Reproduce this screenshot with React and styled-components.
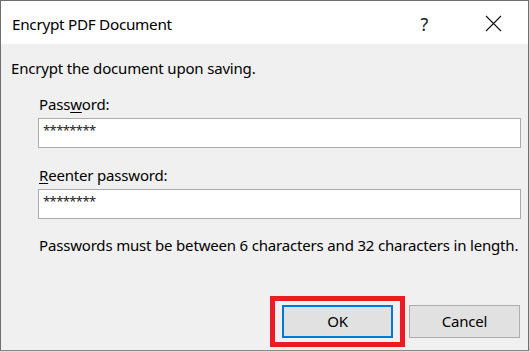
import React from 'react'
import styled, { createGlobalStyle } from 'styled-components'

const GlobalStyle = createGlobalStyle`
  html, body {
    margin: 0;
    padding: 0;
    background: #dcdcdc;
  }
  body {
    font-family: "Segoe UI", "Noto Sans", "Open Sans", sans-serif;
    color: #000;
  }
`

const Dialog = styled.div`
  box-sizing: border-box;
  width: 529px;
  height: 351px;
  display: flex;
  flex-direction: column;
  background: #f0f0f0;
  border: 1px solid #6f6f6f;
  border-bottom-color: #8a8a8a;
`

const TitleBar = styled.div`
  height: 43px;
  flex: none;
  display: flex;
  align-items: center;
  background: #fff;
`

const Title = styled.div`
  flex: 1;
  padding-left: 11px;
  padding-top: 3px;
  font-size: 15.3px;
  letter-spacing: -0.3px;
`

const CaptionButton = styled.div`
  width: 69px;
  height: 43px;
  display: flex;
  align-items: center;
  justify-content: center;
  padding-top: 2px;
  box-sizing: border-box;
  font-size: 18px;
  color: #222;
`

const Body = styled.div`
  flex: 1;
  display: flex;
  flex-direction: column;
  padding: 14px 8px 0 10px;
  font-size: 15px;
  line-height: 20px;
  letter-spacing: -0.18px;
`

const Text = styled.div`
  padding-left: ${p => (p.$indent ? '28px' : '0')};
  margin-top: ${p => p.$top || 0}px;
`

const Field = styled.div`
  display: flex;
  flex-direction: column;
  padding-left: 27px;
  margin-top: ${p => p.$top}px;
`

const Label = styled.label`
  padding-left: 1px;
  margin-bottom: 4px;
  u {
    text-decoration-thickness: 1px;
    text-underline-offset: 2px;
  }
`

const Input = styled.input`
  box-sizing: border-box;
  width: 483px;
  height: 30px;
  border: 1px solid #ababab;
  background: #fff;
  padding: 0 4px 6px;
  font-family: "Noto Sans", sans-serif;
  font-size: 13px;
  letter-spacing: -0.6px;
  color: #222;
  outline: none;
`

const ButtonRow = styled.div`
  margin-top: auto;
  margin-bottom: 12px;
  display: flex;
  justify-content: flex-end;
  gap: 16px;
`

const Button = styled.div`
  position: relative;
  box-sizing: border-box;
  width: 111px;
  height: 33px;
  display: flex;
  align-items: center;
  justify-content: center;
  background: #e1e1e1;
  border: ${p => (p.$primary ? '2px solid #0078d7' : '1px solid #adadad')};
  font-size: 15px;
  padding-bottom: 1px;

  ${p =>
    p.$marked &&
    `
    &::after {
      content: '';
      position: absolute;
      left: -14px;
      right: -14px;
      top: -11px;
      bottom: -11px;
      border: 5.5px solid #ed1c24;
      pointer-events: none;
    }
  `}
`

function CloseIcon() {
  return (
    <svg width="17" height="17" viewBox="0 0 17 17">
      <path d="M1 1 L16 16 M16 1 L1 16" stroke="#111" strokeWidth="1.1" fill="none" />
    </svg>
  )
}

export default function App() {
  return (
    <>
      <GlobalStyle />
      <Dialog>
        <TitleBar>
          <Title>Encrypt PDF Document</Title>
          <CaptionButton>?</CaptionButton>
          <CaptionButton>
            <CloseIcon />
          </CaptionButton>
        </TitleBar>
        <Body>
          <Text>Encrypt the document upon saving.</Text>
          <Field $top={16}>
            <Label>
              Pass<u>w</u>ord:
            </Label>
            <Input readOnly value="********" />
          </Field>
          <Field $top={17}>
            <Label>
              <u>R</u>eenter password:
            </Label>
            <Input readOnly value="********" />
          </Field>
          <Text $indent $top={16}>
            Passwords must be between 6 characters and 32 characters in length.
          </Text>
          <ButtonRow>
            <Button $primary $marked>OK</Button>
            <Button>Cancel</Button>
          </ButtonRow>
        </Body>
      </Dialog>
    </>
  )
}
